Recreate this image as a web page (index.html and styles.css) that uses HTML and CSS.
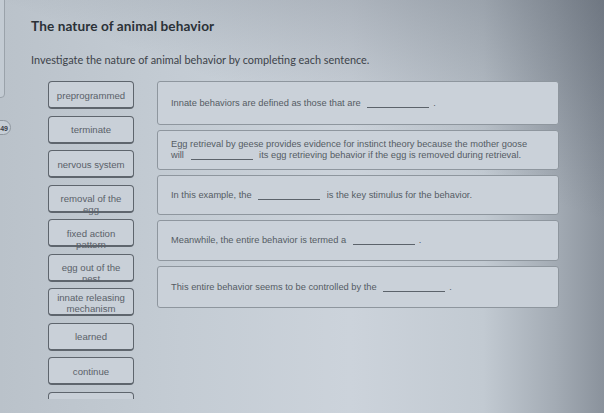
FILE: index.html
```html
<!DOCTYPE html>
<html>
<head>
<meta charset="utf-8">
<link rel="stylesheet" href="styles.css">
</head>
<body>
<div class="side-panel"></div>
<div class="badge">49</div>
<main class="page">
  <h1 class="title">The nature of animal behavior</h1>
  <p class="intro">Investigate the nature of animal behavior by completing each sentence.</p>
  <div class="activity">
    <div class="bank">
      <div class="chip">preprogrammed</div>
      <div class="chip">terminate</div>
      <div class="chip">nervous system</div>
      <div class="chip">removal of the egg</div>
      <div class="chip">fixed action pattern</div>
      <div class="chip">egg out of the nest</div>
      <div class="chip chip-two">innate releasing mechanism</div>
      <div class="chip">learned</div>
      <div class="chip">continue</div>
      <div class="chip"></div>
    </div>
    <div class="sentences">
      <div class="sentence s1"><p>Innate behaviors are defined as those that are <span class="blank"></span>.</p></div>
      <div class="sentence s2"><p><span class="line">Egg retrieval by geese provides evidence for instinct theory because the mother goose</span><span class="line">will <span class="blank"></span> its egg retrieving behavior if the egg is removed during retrieval.</span></p></div>
      <div class="sentence s3"><p>In this example, the <span class="blank"></span> is the key stimulus for the behavior.</p></div>
      <div class="sentence s4"><p>Meanwhile, the entire behavior is termed a <span class="blank"></span>.</p></div>
      <div class="sentence s5"><p>This entire behavior seems to be controlled by the <span class="blank"></span>.</p></div>
    </div>
  </div>
</main>
</body>
</html>
```
FILE: styles.css
```css
html, body {
  margin: 0;
  padding: 0;
}
body {
  width: 604px;
  height: 413px;
  overflow: hidden;
  position: relative;
  background:
    linear-gradient(200deg, rgba(70, 78, 90, 0.4) 0%, rgba(70, 78, 90, 0) 35%),
    linear-gradient(90deg, #bac2ca 0%, #c4ccd4 30%, #ccd3db 58%, #c2cad2 80%, #a3abb4 92%, #8a929c 100%);
  font-family: "Liberation Sans", Arial, sans-serif;
}
.side-panel {
  position: absolute;
  left: -6px;
  top: -4px;
  width: 9px;
  height: 100px;
  border: 1px solid #9aa2aa;
  border-radius: 0 0 4px 0;
  background: #c3cbd3;
}
.badge {
  position: absolute;
  left: -10px;
  top: 120px;
  width: 21px;
  height: 15px;
  border: 1px solid #8f979f;
  border-radius: 0 8px 8px 0;
  background: #c6ced6;
  font-size: 7px;
  font-weight: bold;
  color: #3a4047;
  line-height: 15px;
  text-align: right;
  padding-right: 2px;
  box-sizing: border-box;
}
.page {
  padding: 18px 0 0 31px;
}
.title {
  margin: 0;
  font-family: Lato, "Open Sans", sans-serif;
  font-weight: 700;
  font-size: 13.6px;
  line-height: 17px;
  color: #2b3137;
  letter-spacing: 0.1px;
}
.intro {
  margin: 18px 0 0 0;
  font-family: Lato, "Open Sans", sans-serif;
  font-size: 10.9px;
  line-height: 14px;
  color: #3d434a;
}
.activity {
  display: flex;
  margin-top: 14px;
}
.bank {
  margin-left: 17px;
  width: 86px;
  height: 318px;
  overflow: hidden;
  display: flex;
  flex-direction: column;
  gap: 6.5px;
  flex-shrink: 0;
}
.chip {
  flex-shrink: 0;
  height: 28px;
  box-sizing: border-box;
  border: 1.5px solid #5e656d;
  border-bottom-width: 2.5px;
  border-radius: 4px;
  background: #c9d0d8;
  padding: 7.5px 6px 0;
  font-size: 9.6px;
  line-height: 11px;
  color: #5a6169;
  text-align: center;
}
.chip-two {
  padding-top: 2.5px;
}
.sentences {
  margin-left: 23px;
  width: 402px;
  display: flex;
  flex-direction: column;
  gap: 5px;
}
.sentence {
  box-sizing: border-box;
  height: 41px;
  border: 1px solid #8e969e;
  border-radius: 3px;
  background: #cad1d9;
  padding: 0 18px 0 13px;
  display: flex;
  align-items: center;
}
.sentence.s1 { height: 44px; }
.sentence.s2 { height: 40px; }
.sentence.s3 { height: 40px; }
.sentence.s5 { height: 42px; }
.sentence p {
  margin: 0;
  font-size: 9.3px;
  line-height: 11px;
  color: #555c64;
}
.line {
  display: block;
  white-space: nowrap;
}
.blank {
  display: inline-block;
  width: 62px;
  height: 6px;
  border-bottom: 1px solid #5c636b;
  margin: 0 4px;
  vertical-align: -2px;
}
```
